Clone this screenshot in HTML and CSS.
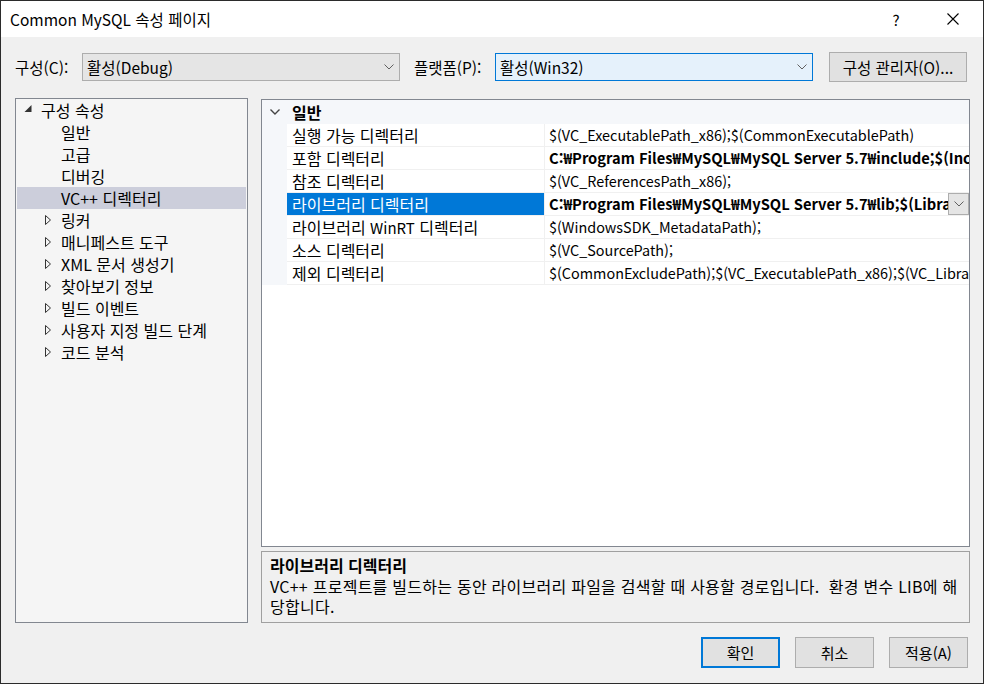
FILE: index.html
```html
<!DOCTYPE html>
<html lang="ko">
<head>
<meta charset="utf-8">
<title>Common MySQL 속성 페이지</title>
<link rel="stylesheet" href="styles.css">
</head>
<body>
<div class="window">
  <div class="titlebar">
    <span class="title">Common MySQL 속성 페이지</span>
    <span class="help">?</span>
    <svg class="close" width="14" height="14" viewBox="0 0 14 14"><path d="M1.5 1.5 L12.5 12.5 M12.5 1.5 L1.5 12.5" stroke="#000" stroke-width="1.1" fill="none"/></svg>
  </div>

  <div class="toolbar">
    <span class="lbl lbl-config">구성(C):</span>
    <div class="combo combo-config">
      <span class="combo-text">활성(Debug)</span>
      <svg class="chev" width="10" height="6" viewBox="0 0 10 6"><polyline points="0.5,0.5 5,5 9.5,0.5" fill="none" stroke="#606060" stroke-width="1"/></svg>
    </div>
    <span class="lbl lbl-platform">플랫폼(P):</span>
    <div class="combo combo-platform">
      <span class="combo-text">활성(Win32)</span>
      <svg class="chev" width="10" height="6" viewBox="0 0 10 6"><polyline points="0.5,0.5 5,5 9.5,0.5" fill="none" stroke="#606060" stroke-width="1"/></svg>
    </div>
    <button class="btn btn-mgr">구성 관리자(O)...</button>
  </div>

  <div class="main">
    <div class="tree">
      <div class="trow root">
        <svg class="twisty" width="16" height="16" viewBox="0 0 16 16"><polygon points="9.5,3 9.5,10 2.5,10" fill="#333"/></svg>
        <span>구성 속성</span>
      </div>
      <div class="trow child"><span class="twisty-space"></span><span>일반</span></div>
      <div class="trow child"><span class="twisty-space"></span><span>고급</span></div>
      <div class="trow child"><span class="twisty-space"></span><span>디버깅</span></div>
      <div class="trow child selected"><span class="twisty-space"></span><span>VC++ 디렉터리</span></div>
      <div class="trow child"><svg class="twisty" width="16" height="16" viewBox="0 0 16 16"><polygon points="3.5,3.5 8.5,8 3.5,12.5" fill="none" stroke="#333" stroke-width="1"/></svg><span>링커</span></div>
      <div class="trow child"><svg class="twisty" width="16" height="16" viewBox="0 0 16 16"><polygon points="3.5,3.5 8.5,8 3.5,12.5" fill="none" stroke="#333" stroke-width="1"/></svg><span>매니페스트 도구</span></div>
      <div class="trow child"><svg class="twisty" width="16" height="16" viewBox="0 0 16 16"><polygon points="3.5,3.5 8.5,8 3.5,12.5" fill="none" stroke="#333" stroke-width="1"/></svg><span>XML 문서 생성기</span></div>
      <div class="trow child"><svg class="twisty" width="16" height="16" viewBox="0 0 16 16"><polygon points="3.5,3.5 8.5,8 3.5,12.5" fill="none" stroke="#333" stroke-width="1"/></svg><span>찾아보기 정보</span></div>
      <div class="trow child"><svg class="twisty" width="16" height="16" viewBox="0 0 16 16"><polygon points="3.5,3.5 8.5,8 3.5,12.5" fill="none" stroke="#333" stroke-width="1"/></svg><span>빌드 이벤트</span></div>
      <div class="trow child"><svg class="twisty" width="16" height="16" viewBox="0 0 16 16"><polygon points="3.5,3.5 8.5,8 3.5,12.5" fill="none" stroke="#333" stroke-width="1"/></svg><span>사용자 지정 빌드 단계</span></div>
      <div class="trow child"><svg class="twisty" width="16" height="16" viewBox="0 0 16 16"><polygon points="3.5,3.5 8.5,8 3.5,12.5" fill="none" stroke="#333" stroke-width="1"/></svg><span>코드 분석</span></div>
    </div>

    <div class="rightcol">
      <div class="grid">
        <div class="grid-head">
          <div class="gut"><svg width="25" height="24" viewBox="0 0 25 24"><polyline points="8.5,9.5 13,14 17.5,9.5" fill="none" stroke="#444" stroke-width="1.4"/></svg></div>
          <span class="head-text">일반</span>
        </div>
        <div class="prow"><div class="gut"></div><div class="name">실행 가능 디렉터리</div><div class="val"><span class="vtext">$(VC_ExecutablePath_x86);$(CommonExecutablePath)</span></div></div>
        <div class="prow"><div class="gut"></div><div class="name">포함 디렉터리</div><div class="val bold"><span class="vtext">C:₩Program Files₩MySQL₩MySQL Server 5.7₩include;$(IncludePath)</span></div></div>
        <div class="prow"><div class="gut"></div><div class="name">참조 디렉터리</div><div class="val"><span class="vtext">$(VC_ReferencesPath_x86);</span></div></div>
        <div class="prow sel"><div class="gut"></div><div class="name">라이브러리 디렉터리</div><div class="val bold"><span class="vtext">C:₩Program Files₩MySQL₩MySQL Server 5.7₩lib;$(LibraryPath)</span><span class="ddbtn"><svg width="10" height="6" viewBox="0 0 10 6"><polyline points="0.5,0.5 5,5 9.5,0.5" fill="none" stroke="#606060" stroke-width="1"/></svg></span></div></div>
        <div class="prow"><div class="gut"></div><div class="name">라이브러리 <span class="latin">WinRT</span> 디렉터리</div><div class="val"><span class="vtext">$(WindowsSDK_MetadataPath);</span></div></div>
        <div class="prow"><div class="gut"></div><div class="name">소스 디렉터리</div><div class="val"><span class="vtext">$(VC_SourcePath);</span></div></div>
        <div class="prow"><div class="gut"></div><div class="name">제외 디렉터리</div><div class="val"><span class="vtext">$(CommonExcludePath);$(VC_ExecutablePath_x86);$(VC_LibraryPath_x86)</span></div></div>
      </div>
      <div class="desc">
        <div class="desc-title">라이브러리 디렉터리</div>
        <div class="desc-text">VC++ 프로젝트를 빌드하는 동안 라이브러리 파일을 검색할 때 사용할 경로입니다.&nbsp; 환경 변수 LIB에 해<br>당합니다.</div>
      </div>
    </div>
  </div>

  <div class="footer">
    <button class="btn btn-ok">확인</button>
    <button class="btn">취소</button>
    <button class="btn">적용(A)</button>
  </div>
</div>
</body>
</html>
```

FILE: styles.css
```css
* { box-sizing: border-box; }

html, body {
  margin: 0;
  padding: 0;
  background: #f0f0f0;
}

body {
  font-family: "Noto Sans CJK KR", "Noto Sans", sans-serif;
  font-size: 16px;
  color: #000;
}

.window {
  width: 984px;
  height: 684px;
  border: 1px solid #2b2b2b;
  background: #f0f0f0;
  display: flex;
  flex-direction: column;
  overflow: hidden;
}

/* title bar */
.titlebar {
  height: 36px;
  background: #fff;
  display: flex;
  align-items: center;
  padding-left: 9px;
  flex-shrink: 0;
}
.title {
  flex: 1;
  font-size: 15.5px;
  line-height: 20px;
}
.help {
  width: 20px;
  text-align: center;
  font-size: 15px;
  margin-right: 40px;
}
.close {
  margin-right: 23px;
}

/* toolbar */
.toolbar {
  display: flex;
  align-items: center;
  height: 30px;
  margin-top: 15px;
  padding-left: 14px;
  flex-shrink: 0;
  font-size: 15.5px;
}
.lbl {
  white-space: nowrap;
}
.lbl-config { width: 67px; }
.lbl-platform { width: 95px; padding-left: 14px; }

.combo {
  width: 318px;
  height: 28px;
  border: 1px solid #adadad;
  background: #e5e5e5;
  display: flex;
  align-items: center;
  padding-left: 4px;
  padding-right: 5px;
}
.combo-platform {
  background: #e5f1fb;
  border-color: #0078d7;
}
.combo-text { flex: 1; }
.chev { flex-shrink: 0; }

.btn {
  font-family: inherit;
  font-size: 15px;
  color: #000;
  background: #e1e1e1;
  border: 1px solid #adadad;
  height: 30px;
  padding: 0;
  margin: 0;
}
.btn-mgr {
  width: 138px;
  margin-left: 16px;
  font-size: 15.5px;
}

/* main area */
.main {
  display: flex;
  gap: 13px;
  margin-top: 16px;
  padding-left: 14px;
  height: 525px;
  flex-shrink: 0;
}

.tree {
  width: 233px;
  height: 525px;
  border: 1px solid #828790;
  background: #f5f5f5;
  padding: 0 1px;
}
.trow {
  height: 22px;
  display: flex;
  align-items: center;
  white-space: nowrap;
}
.trow.root { padding-left: 5px; }
.trow.child { padding-left: 25px; }
.trow.selected { background: #cccedb; }
.twisty, .twisty-space {
  width: 16px;
  height: 16px;
  flex-shrink: 0;
  margin-right: 3px;
}

.rightcol {
  width: 709px;
  display: flex;
  flex-direction: column;
  gap: 4px;
}

.grid {
  height: 448px;
  margin-top: 1px;
  border: 1px solid #828790;
  background: #fff;
  overflow: hidden;
}
.grid-head {
  height: 24px;
  background: #f5f7fa;
  display: flex;
  align-items: center;
}
.grid-head .gut { width: 25px; height: 24px; }
.head-text {
  font-weight: bold;
  padding-left: 5px;
}
.prow {
  display: flex;
  height: 23px;
}
.prow .gut {
  width: 25px;
  background: #f5f7fa;
  flex-shrink: 0;
}
.prow .name {
  width: 258px;
  flex-shrink: 0;
  padding-left: 5px;
  border-right: 1px solid #f0f0f0;
  border-bottom: 1px solid #f0f0f0;
  line-height: 22px;
  white-space: nowrap;
}
.latin { font-size: 15px; }
.prow .val {
  flex: 1;
  min-width: 0;
  display: flex;
  padding-left: 4px;
  border-bottom: 1px solid #f0f0f0;
  line-height: 22px;
  font-size: 14.4px;
}
.vtext {
  flex: 1;
  min-width: 0;
  overflow: hidden;
  white-space: nowrap;
}
.prow .val.bold { font-weight: bold; font-size: 14.7px; }
.prow.sel .name {
  background: #0078d7;
  color: #fff;
}
.ddbtn {
  width: 21px;
  height: 22px;
  flex-shrink: 0;
  background: #e5e5e5;
  border: 1px solid #adadad;
  display: flex;
  align-items: center;
  justify-content: center;
}

.desc {
  height: 72px;
  border: 1px solid #a0a0a0;
  background: #f0f0f0;
  padding: 3px 8px 0 8px;
}
.desc-title {
  font-weight: bold;
  line-height: 21px;
}
.desc-text {
  line-height: 20px;
  white-space: nowrap;
  letter-spacing: 0.25px;
}

/* footer */
.footer {
  display: flex;
  justify-content: flex-end;
  gap: 15px;
  margin-top: 14px;
  padding-right: 15px;
}
.footer .btn {
  width: 79px;
  height: 31px;
}
.btn-ok {
  border: 2px solid #0078d7;
}
```
